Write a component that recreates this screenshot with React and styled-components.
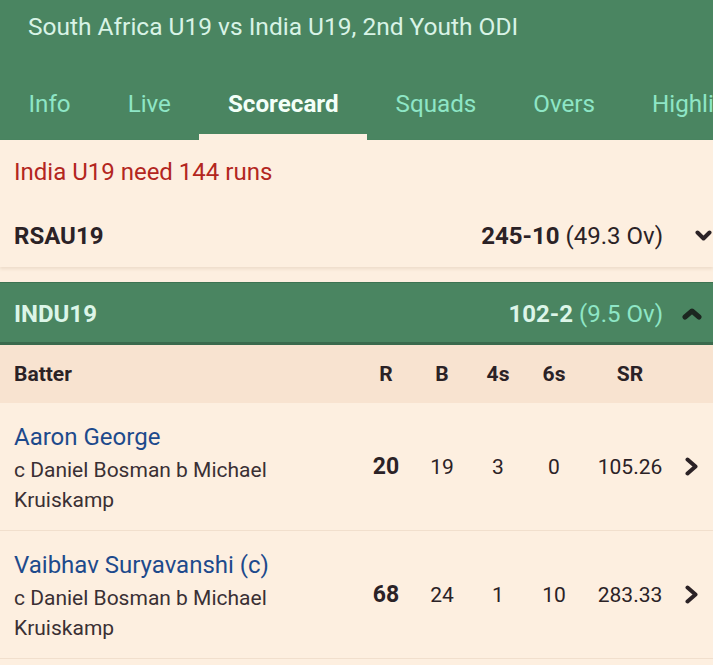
import React from 'react';
import styled, { createGlobalStyle } from 'styled-components';

const GlobalStyle = createGlobalStyle`
  body {
    margin: 0;
    background: #fdefe0;
    font-family: Roboto, "Liberation Sans", sans-serif;
    color: #2b2226;
  }
`;

const tabs = ['Info', 'Live', 'Scorecard', 'Squads', 'Overs', 'Highlights'];

const batters = [
  { name: 'Aaron George', out: 'c Daniel Bosman b Michael Kruiskamp', r: 20, b: 19, f: 3, s: 0, sr: '105.26' },
  { name: 'Vaibhav Suryavanshi (c)', out: 'c Daniel Bosman b Michael Kruiskamp', r: 68, b: 24, f: 1, s: 10, sr: '283.33' },
];

// simple chevrons, thick stroke like the app's arrows
const Chevron = ({ dir, color, w, h, stroke = 4 }) => {
  const s = stroke / 2 + 0.5;
  const pts = {
    down: `${s},${s} ${w / 2},${h - s} ${w - s},${s}`,
    up: `${s},${h - s} ${w / 2},${s} ${w - s},${h - s}`,
    right: `${s},${s} ${w - s},${h / 2} ${s},${h - s}`,
  }[dir];
  return (
    <svg width={w} height={h} viewBox={`0 0 ${w} ${h}`}>
      <polyline points={pts} fill="none" stroke={color} strokeWidth={stroke} strokeLinecap="round" strokeLinejoin="round" />
    </svg>
  );
};

export default function App() {
  return (
    <Page>
      <GlobalStyle />
      <Header>
        <Title>South Africa U19 vs India U19, 2nd Youth ODI</Title>
        <Tabs>
          {tabs.map((t) => (
            <Tab key={t} $active={t === 'Scorecard'}>{t}</Tab>
          ))}
        </Tabs>
      </Header>

      <Card>
        <Status>India U19 need 144 runs</Status>
        <TeamRow>
          <TeamName>RSAU19</TeamName>
          <Score>
            <b>245-10</b> (49.3 Ov)
          </Score>
          <ChevronBox $left={32} $right={1}>
            <Chevron dir="down" color="#2b2226" w={17} h={11} />
          </ChevronBox>
        </TeamRow>
      </Card>

      <InningsBar>
        <TeamName $light>INDU19</TeamName>
        <Score $light>
          <b>102-2</b> (9.5 Ov)
        </Score>
        <ChevronBox $left={19} $right={11}>
          <Chevron dir="up" color="#1c2620" w={20} h={12} stroke={5} />
        </ChevronBox>
      </InningsBar>

      <HeadRow>
        <HeadCell $left>Batter</HeadCell>
        <HeadCell>R</HeadCell>
        <HeadCell>B</HeadCell>
        <HeadCell>4s</HeadCell>
        <HeadCell>6s</HeadCell>
        <HeadCell>SR</HeadCell>
        <HeadCell />
      </HeadRow>

      {batters.map((p) => (
        <BatterRow key={p.name}>
          <Who>
            <Name>{p.name}</Name>
            <Dismissal>{p.out}</Dismissal>
          </Who>
          <Num $bold>{p.r}</Num>
          <Num>{p.b}</Num>
          <Num>{p.f}</Num>
          <Num>{p.s}</Num>
          <Num>{p.sr}</Num>
          <Num>
            <Chevron dir="right" color="#2b2226" w={13} h={19} />
          </Num>
        </BatterRow>
      ))}
    </Page>
  );
}

const Page = styled.div`
  width: 713px;
  min-height: 665px;
  overflow: hidden;
  background: #fdefe0;
`;

const Header = styled.header`
  background: #4a8561;
  overflow: hidden;
`;

const Title = styled.div`
  height: 54px;
  line-height: 54px;
  padding-left: 28px;
  font-size: 24.5px;
  color: #d8f3e6;
`;

const Tabs = styled.nav`
  display: flex;
  white-space: nowrap;
`;

const Tab = styled.div`
  padding: 36px 28.5px 16px;
  line-height: 28px;
  font-size: 24.2px;
  font-weight: ${(p) => (p.$active ? 700 : 400)};
  color: ${(p) => (p.$active ? '#f3fff8' : '#8ee6c6')};
  border-bottom: 6px solid ${(p) => (p.$active ? '#fdf0e2' : 'transparent')};
`;

const Card = styled.section`
  background: #fdefe0;
  box-shadow: 0 2px 3px rgba(120, 80, 40, 0.12);
  margin-bottom: 15px;
`;

const Status = styled.div`
  padding: 18px 14px;
  line-height: 28px;
  font-size: 24px;
  color: #b3261e;
`;

const TeamRow = styled.div`
  display: flex;
  align-items: center;
  height: 63px;
  padding-left: 14px;
`;

const TeamName = styled.div`
  flex: 1;
  font-size: 24px;
  font-weight: 700;
  color: ${(p) => (p.$light ? '#dcf5e8' : '#2b2226')};
`;

const Score = styled.div`
  font-size: 24px;
  color: ${(p) => (p.$light ? '#8ee6c6' : '#2b2226')};
  b {
    font-weight: 700;
    color: ${(p) => (p.$light ? '#dcf5e8' : '#2b2226')};
  }
`;

const ChevronBox = styled.div`
  display: flex;
  margin-left: ${(p) => p.$left}px;
  margin-right: ${(p) => p.$right}px;
`;

const InningsBar = styled.div`
  display: flex;
  align-items: center;
  height: 62px;
  padding-left: 14px;
  background: #4a8561;
  border-top: 1px solid #3d7352;
  box-shadow: inset 0 -3px 0 #3a6a4d;
`;

const Grid = styled.div`
  display: grid;
  grid-template-columns: 1fr 56px 56px 56px 56px 96px 26px;
  align-items: center;
  padding: 0 9px 0 14px;
`;

const HeadRow = styled(Grid)`
  background: #f8e3d0;
`;

const HeadCell = styled.div`
  font-size: 21px;
  font-weight: 700;
  text-align: ${(p) => (p.$left ? 'left' : 'center')};
  line-height: 58px;
`;

const BatterRow = styled(Grid)`
  min-height: 127px;
  border-bottom: 1px solid #f1dfcd;
`;

const Who = styled.div`
  padding: 19px 0 15px;
`;

const Name = styled.div`
  font-size: 24px;
  line-height: 30px;
  color: #1d4a8c;
  margin-bottom: 3px;
`;

const Dismissal = styled.div`
  font-size: 21px;
  line-height: 30px;
  color: #3a3034;
  max-width: 290px;
`;

const Num = styled.div`
  display: flex;
  justify-content: center;
  font-size: ${(p) => (p.$bold ? 23 : 21)}px;
  font-weight: ${(p) => (p.$bold ? 700 : 400)};
`;
